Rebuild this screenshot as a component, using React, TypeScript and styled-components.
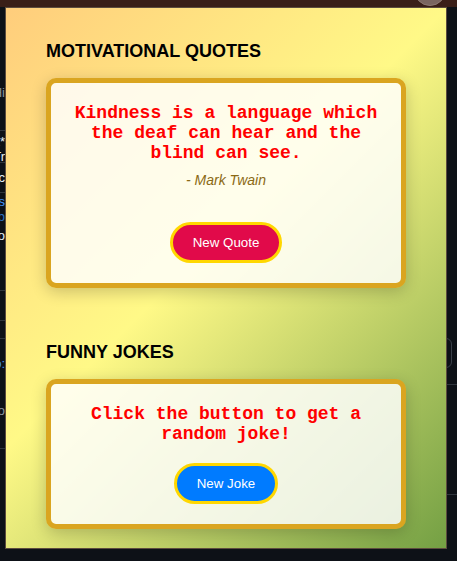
import React from "react";
import styled, { createGlobalStyle } from "styled-components";

const GlobalStyle = createGlobalStyle`
  html, body {
    margin: 0;
    padding: 0;
    background: #0d1117;
    font-family: "Liberation Sans", Arial, sans-serif;
  }
  * { box-sizing: border-box; }
`;

const Screen = styled.div`
  position: relative;
  width: 457px;
  height: 561px;
  overflow: hidden;
  background: #0d1117;
`;

const TopBar = styled.div`
  height: 7px;
  background: #3a1f18;
  position: relative;
  overflow: hidden;
`;

const Avatar = styled.div`
  position: absolute;
  left: 414px;
  top: -26px;
  width: 32px;
  height: 32px;
  border-radius: 50%;
  background: #7a6660;
  border: 1px solid #8e7a72;
`;

const Sidebar = styled.div`
  width: 5px;
  overflow: hidden;
  display: flex;
  flex-direction: column;
  padding-top: 70px;
`;

const SideRow = styled.div<{ $h: number; $line?: boolean }>`
  height: ${(p) => p.$h}px;
  display: flex;
  align-items: center;
  justify-content: flex-end;
  white-space: nowrap;
  border-bottom: ${(p) => (p.$line ? "1px solid #30363d" : "none")};
`;

const SideText = styled.span<{ $c: string }>`
  font-size: 13px;
  color: ${(p) => p.$c};
  font-family: "Liberation Sans", Arial, sans-serif;
`;

const RightTicks = styled.div`
  position: absolute;
  left: 447px;
  top: 300px;
  width: 10px;
  display: flex;
  flex-direction: column;
`;

const OutlineBtn = styled.div`
  margin-top: 38px;
  margin-left: -20px;
  width: 25px;
  height: 30px;
  border: 1px solid #3a4049;
  border-radius: 6px;
`;

const Tick = styled.div<{ $mt: number }>`
  margin-top: ${(p) => p.$mt}px;
  height: 1px;
  background: #30363d;
`;

const Popup = styled.div`
  position: absolute;
  left: 5px;
  top: 7px;
  width: 442px;
  height: 542px;
  border: 1px solid #5c4c3e;
  background: linear-gradient(135deg, #ffcd7c 0%, #fff987 45%, #74a044 100%);
  padding: 33px 40px 20px 40px;
  overflow: hidden;
  display: flex;
  flex-direction: column;
`;

const Section = styled.section`
  display: flex;
  flex-direction: column;
  & + & {
    margin-top: 54px;
  }
`;

const Heading = styled.h2`
  margin: 0 0 16px 0;
  font-family: "Liberation Sans", Arial, sans-serif;
  font-size: 18px;
  font-weight: bold;
  color: #000;
  line-height: normal;
`;

const Card = styled.div`
  border: 5px solid #daa520;
  border-radius: 10px;
  background: rgba(255, 255, 255, 0.83);
  box-shadow: 0 4px 16px rgba(0, 0, 0, 0.2);
  padding: 20px;
  display: flex;
  flex-direction: column;
  align-items: center;
  text-align: center;
`;

const Quote = styled.p`
  margin: 0;
  font-family: "Liberation Mono", "Courier New", monospace;
  font-size: 18px;
  font-weight: bold;
  color: #ff0000;
  line-height: normal;
`;

const Author = styled.p`
  margin: 9px 0 0 0;
  font-family: "Liberation Sans", Arial, sans-serif;
  font-style: italic;
  font-size: 14px;
  color: #8b6914;
  line-height: normal;
`;

const ActionButton = styled.button<{ $bg: string; $mt: number }>`
  margin-top: ${(p) => p.$mt}px;
  padding: 10px 20px;
  border: 3px solid #ffd700;
  border-radius: 25px;
  background: ${(p) => p.$bg};
  color: #fff;
  font-family: "Liberation Sans", Arial, sans-serif;
  font-size: 13.333px;
  line-height: normal;
  cursor: pointer;
`;

const sideRows: { h: number; line?: boolean; text?: string; c?: string }[] = [
  { h: 30, text: "Hi", c: "#8b949e" },
  { h: 24, line: true },
  { h: 20, text: "x*", c: "#e6edf3" },
  { h: 12, text: "Tr", c: "#e6edf3", line: true },
  { h: 30, text: "dic", c: "#e6edf3", line: true },
  { h: 16, text: "ops", c: "#4493f8" },
  { h: 14, text: "ab", c: "#2f6fbf" },
  { h: 24, text: "to", c: "#e6edf3" },
  { h: 44, line: true },
  { h: 30, line: true },
  { h: 18, line: true },
  { h: 48, text: "do:", c: "#4493f8" },
  { h: 46, text: "bo", c: "#8b949e" },
  { h: 16, line: true },
];

export default function App() {
  return (
    <>
      <GlobalStyle />
      <Screen>
        <TopBar>
          <Avatar />
        </TopBar>
        <Sidebar>
          {sideRows.map((r, i) => (
            <SideRow key={i} $h={r.h} $line={r.line}>
              {r.text && <SideText $c={r.c || "#fff"}>{r.text}</SideText>}
            </SideRow>
          ))}
        </Sidebar>
        <RightTicks>
          <OutlineBtn />
          <Tick $mt={16} />
          <Tick $mt={109} />
        </RightTicks>
        <Popup>
          <Section>
            <Heading>MOTIVATIONAL QUOTES</Heading>
            <Card>
              <Quote>Kindness is a language which the deaf can hear and the blind can see.</Quote>
              <Author>- Mark Twain</Author>
              <ActionButton $bg="#e10a4a" $mt={34}>New Quote</ActionButton>
            </Card>
          </Section>
          <Section>
            <Heading>FUNNY JOKES</Heading>
            <Card>
              <Quote>Click the button to get a random joke!</Quote>
              <ActionButton $bg="#007bff" $mt={19}>New Joke</ActionButton>
            </Card>
          </Section>
        </Popup>
      </Screen>
    </>
  );
}
